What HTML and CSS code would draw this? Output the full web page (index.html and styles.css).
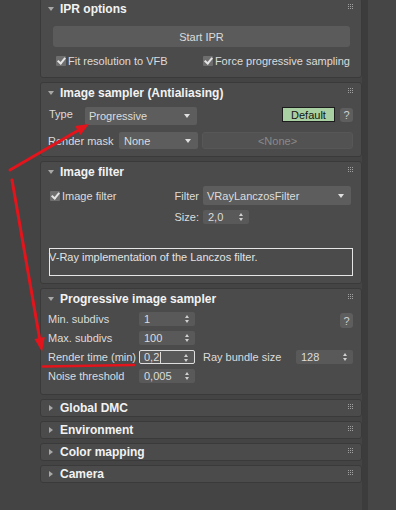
FILE: index.html
```html
<!DOCTYPE html>
<html lang="en">
<head>
    <meta charset="UTF-8">
    <title>V-Ray render settings</title>
    <link rel="stylesheet" href="styles.css">
</head>
<body>
<div class="screen">

    <div class="gutter"></div>

    <div class="rollouts">

        <div class="rollout ipr">
            <div class="head">
                <span class="tri open"></span>
                <span class="title">IPR options</span>
                <span class="grip"></span>
            </div>
            <div class="body">
                <div class="btn big">Start IPR</div>
                <div class="checks">
                    <label class="check"><span class="box"></span>Fit resolution to VFB</label>
                    <label class="check"><span class="box"></span>Force progressive sampling</label>
                </div>
            </div>
        </div>

        <div class="rollout sampler">
            <div class="head">
                <span class="tri open"></span>
                <span class="title">Image sampler (Antialiasing)</span>
                <span class="grip"></span>
            </div>
            <div class="body">
                <div class="row type-row">
                    <span class="lbl type-lbl">Type</span>
                    <div class="drop type-drop">Progressive<span class="arrow"></span></div>
                    <span class="fill"></span>
                    <div class="btn default">Default</div>
                    <div class="btn help">?</div>
                </div>
                <div class="row mask-row">
                    <span class="lbl mask-lbl">Render mask</span>
                    <div class="drop mask-drop">None<span class="arrow"></span></div>
                    <div class="btn none">&lt;None&gt;</div>
                </div>
            </div>
        </div>

        <div class="rollout filter">
            <div class="head">
                <span class="tri open"></span>
                <span class="title">Image filter</span>
                <span class="grip"></span>
            </div>
            <div class="body">
                <div class="filter-grid">
                    <label class="check"><span class="box"></span>Image filter</label>
                    <span class="lbl right">Filter</span>
                    <div class="drop">VRayLanczosFilter<span class="arrow"></span></div>

                    <span></span>
                    <span class="lbl right">Size:</span>
                    <div class="spin size-spin">2,0<span class="updown"></span></div>
                </div>
                <div class="note">V-Ray implementation of the Lanczos filter.</div>
            </div>
        </div>

        <div class="rollout progressive">
            <div class="head">
                <span class="tri open"></span>
                <span class="title">Progressive image sampler</span>
                <span class="grip"></span>
            </div>
            <div class="body">
                <div class="prow">
                    <span class="lbl">Min. subdivs</span>
                    <div class="spin">1<span class="updown"></span></div>
                    <div class="extra"><span class="fill"></span><div class="btn help">?</div></div>
                </div>
                <div class="prow">
                    <span class="lbl">Max. subdivs</span>
                    <div class="spin">100<span class="updown"></span></div>
                    <div class="extra"></div>
                </div>
                <div class="prow">
                    <span class="lbl">Render time (min)</span>
                    <div class="spin focus">0,2<span class="caret"></span><span class="updown"></span></div>
                    <div class="extra">
                        <span class="lbl ray-lbl">Ray bundle size</span>
                        <span class="fill"></span>
                        <div class="spin ray-spin">128<span class="updown"></span></div>
                    </div>
                </div>
                <div class="prow">
                    <span class="lbl">Noise threshold</span>
                    <div class="spin">0,005<span class="updown"></span></div>
                    <div class="extra"></div>
                </div>
            </div>
        </div>

        <div class="rollout closed">
            <div class="head"><span class="tri"></span><span class="title">Global DMC</span><span class="grip"></span></div>
        </div>
        <div class="rollout closed">
            <div class="head"><span class="tri"></span><span class="title">Environment</span><span class="grip"></span></div>
        </div>
        <div class="rollout closed">
            <div class="head"><span class="tri"></span><span class="title">Color mapping</span><span class="grip"></span></div>
        </div>
        <div class="rollout closed">
            <div class="head"><span class="tri"></span><span class="title">Camera</span><span class="grip"></span></div>
        </div>

    </div>

    <div class="scroll"></div>
</div>

<!-- red annotation drawn over the screenshot -->
<svg class="marks" width="396" height="510" viewBox="0 0 396 510">
    <g stroke="#e3141b" stroke-width="3" stroke-linecap="round" fill="none">
        <path d="M10 170 L78 130.5"/>
        <path d="M12 180 L39.6 338.5"/>
        <path d="M43 366.5 L134 365" stroke-width="2.5"/>
    </g>
    <g fill="#e3141b">
        <polygon points="89,124 80.5,135 75,126"/>
        <polygon points="42,352 44.8,337 34.5,339"/>
    </g>
</svg>
</body>
</html>
```

FILE: styles.css
```css
* {
    box-sizing: border-box;
}

html, body {
    width: 396px;
    height: 510px;
}

body {
    margin: 0;
    padding: 0;
    position: relative;
    overflow: hidden;
    background: #444444;
    font-family: "Liberation Sans", Arial, sans-serif;
    font-size: 11px;
    color: #dcdcdc;
}

.screen {
    display: flex;
    height: 510px;
}

.gutter {
    width: 40px;
    flex: none;
}

.rollouts {
    width: 322px;
    flex: none;
    display: flex;
    flex-direction: column;
    gap: 4px;
    margin-top: -2px;
}

.scroll {
    flex: 1;
    background: #464646;
    border-left: 6px solid #3c3c3c;
}

.rollout {
    background: #4b4b4b;
    border: 1px solid #3a3a3a;
    border-radius: 3px;
    flex: none;
}

.head {
    height: 19px;
    display: flex;
    align-items: center;
    padding: 0 7px;
}

.closed {
    height: 18px;
}

.closed .head {
    height: 16px;
}

.title {
    flex: 1;
    margin-left: 6px;
    font-size: 12px;
    font-weight: bold;
    color: #f2f2f2;
}

.tri {
    width: 6px;
    height: 6px;
    position: relative;
}

.tri::after {
    content: "";
    position: absolute;
    left: 1px;
    top: 0;
    border-top: 3px solid transparent;
    border-bottom: 3px solid transparent;
    border-left: 4px solid #a8a8a8;
}

.tri.open::after {
    left: 0;
    top: 1px;
    border-left: 3px solid transparent;
    border-right: 3px solid transparent;
    border-top: 4px solid #a8a8a8;
    border-bottom: 0;
}

/* 3x3 dotted drag handle */
.grip {
    width: 6px;
    height: 6px;
    margin-bottom: 3px;
    position: relative;
}

.grip::after {
    content: "";
    position: absolute;
    left: 0;
    top: 0;
    width: 1px;
    height: 1px;
    background: #a0a0a0;
    box-shadow: 2px 0 #a0a0a0, 4px 0 #a0a0a0,
                0 2px #a0a0a0, 2px 2px #a0a0a0, 4px 2px #a0a0a0,
                0 4px #a0a0a0, 2px 4px #a0a0a0, 4px 4px #a0a0a0;
}

/* buttons */

.btn {
    background: #5b5b5b;
    border-radius: 3px;
    color: #dcdcdc;
    display: flex;
    align-items: center;
    justify-content: center;
}

.btn.big {
    height: 21px;
    font-size: 11px;
}

.btn.default {
    width: 53px;
    height: 15px;
    background: #a9d0a3;
    border: 1px solid #1c1c1c;
    border-radius: 0;
    color: #151515;
    align-self: flex-start;
}

.btn.help {
    width: 13px;
    height: 14px;
    margin-left: 5px;
    background: #5e5e5e;
    color: #cfcfcf;
    font-size: 11px;
    align-self: flex-start;
    margin-top: 1px;
}

.btn.none {
    flex: 1;
    height: 17px;
    margin-left: 4px;
    background: #525252;
    border: 1px solid #575757;
    color: #8a8a8a;
}

/* checkbox */

.check {
    display: flex;
    align-items: center;
    gap: 2px;
    white-space: nowrap;
}

.box {
    width: 10px;
    height: 10px;
    background: #6e6e6e;
    border-radius: 1px;
    position: relative;
}

.box::after {
    content: "";
    position: absolute;
    left: 3px;
    top: 0;
    width: 3px;
    height: 6px;
    border-right: 2px solid #e4e4e4;
    border-bottom: 2px solid #e4e4e4;
    transform: rotate(40deg);
}

/* dropdown + spinner */

.drop, .spin {
    position: relative;
    background: #5d5d5d;
    border-radius: 2px;
    color: #dcdcdc;
    display: flex;
    align-items: center;
    padding-left: 4px;
    white-space: nowrap;
}

.arrow {
    position: absolute;
    right: 7px;
    top: 50%;
    margin-top: -2px;
    border-left: 3.5px solid transparent;
    border-right: 3.5px solid transparent;
    border-top: 4px solid #e0e0e0;
}

.spin {
    height: 14px;
    padding-left: 5px;
    background: #595959;
}

.updown {
    position: absolute;
    right: 5px;
    top: 3px;
    width: 5px;
    height: 8px;
}

.updown::before, .updown::after {
    content: "";
    position: absolute;
    left: 0;
    border-left: 2.5px solid transparent;
    border-right: 2.5px solid transparent;
}

.updown::before {
    top: 0;
    border-bottom: 3px solid #d0d0d0;
}

.updown::after {
    bottom: 0;
    border-top: 3px solid #d0d0d0;
}

.spin.focus {
    border: 1px solid #dedede;
    padding-left: 4px;
}

.caret {
    width: 1px;
    height: 11px;
    margin-left: 1px;
    background: #dedede;
}

/* IPR options */

.ipr {
    height: 80px;
}

.ipr .body {
    padding: 8px 11px 0 12px;
}

.checks {
    margin-top: 7px;
    height: 14px;
    padding-left: 3px;
    display: flex;
    justify-content: space-between;
    align-items: center;
}

/* Image sampler */

.sampler {
    height: 75px;
}

.sampler .body {
    padding: 5px 8px 0 8px;
}

.row {
    display: flex;
}

.type-row {
    height: 18px;
}

.mask-row {
    height: 17px;
    margin-top: 7px;
}

.lbl {
    white-space: nowrap;
}

.type-lbl {
    width: 36px;
    padding-top: 1px;
}

.type-drop {
    width: 112px;
}

.fill {
    flex: 1;
}

.mask-lbl {
    width: 71px;
    margin-left: -1px;
    align-self: center;
}

.mask-drop {
    width: 79px;
    padding-left: 5px;
}

/* Image filter */

.filter {
    height: 123px;
}

.filter .body {
    padding: 5px 10px 0 9px;
}

.filter-grid {
    display: grid;
    grid-template-columns: 1fr auto 148px;
    grid-template-rows: 19px 14px;
    row-gap: 5px;
    column-gap: 4px;
    align-items: center;
}

.filter-grid .drop {
    height: 19px;
}

.right {
    text-align: right;
}

.size-spin {
    width: 46px;
}

.note {
    margin: 24px -2px 0 -1px;
    height: 28px;
    border: 1px solid #e6e6e6;
    padding-top: 1px;
    text-indent: -1px;
    color: #e4e4e4;
    line-height: 14px;
}

/* Progressive image sampler */

.progressive {
    height: 107px;
}

.progressive .body {
    padding: 3px 8px 0 7px;
    display: flex;
    flex-direction: column;
    gap: 3px;
}

.prow {
    height: 16px;
    display: grid;
    grid-template-columns: 91px 56px 1fr;
    align-items: center;
}

.extra {
    display: flex;
    align-items: center;
    height: 16px;
}

.ray-lbl {
    margin-left: 8px;
}

.ray-spin {
    width: 57px;
}

.prow .btn.help {
    height: 15px;
    margin-top: 2px;
}

/* annotation */

.marks {
    position: absolute;
    top: 0;
    left: 0;
    pointer-events: none;
}
```
